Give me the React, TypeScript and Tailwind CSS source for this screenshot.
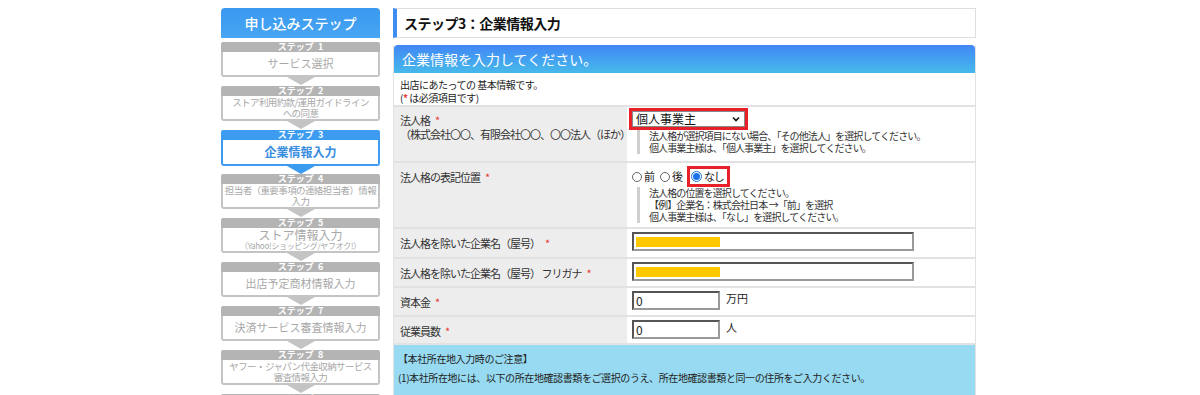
const font = { fontFamily: '"Noto Sans CJK JP", "Noto Sans", sans-serif' };

type Step = { no: number; lines: string[]; sub?: string; active?: boolean; small?: boolean };

const steps: Step[] = [
  { no: 1, lines: ['サービス選択'] },
  { no: 2, lines: ['ストア利用約款/運用ガイドライン', 'への同意'], small: true },
  { no: 3, lines: ['企業情報入力'], active: true },
  { no: 4, lines: ['担当者（重要事項の連絡担当者）情報', '入力'], small: true },
  { no: 5, lines: ['ストア情報入力'], sub: '（Yahoo!ショッピング/ヤフオク!）' },
  { no: 6, lines: ['出店予定商材情報入力'] },
  { no: 7, lines: ['決済サービス審査情報入力'] },
  { no: 8, lines: ['ヤフー・ジャパン代金収納サービス', '審査情報入力'], small: true },
  { no: 9, lines: [''] },
];

const StepBox = ({ step }: { step: Step }) => {
  const color = step.active ? 'bg-[#3d9cf0]' : 'bg-[#b4b4b4]';
  const border = step.active ? 'border-[#3d9cf0]' : 'border-[#c4c4c4]';
  return (
    <div className="flex flex-col items-center">
      <div className={`w-full h-[10px] ${color} text-white text-[9px] leading-[10px] font-bold text-center rounded-t-[2px]`}>
        ステップ&nbsp;&nbsp;{step.no}
      </div>
      <div
        className={`w-full ${step.active ? 'h-[26px]' : 'h-[25px]'} bg-white border-2 border-t-0 ${border} rounded-b-[3px] flex flex-col items-center justify-center`}
      >
        {step.small ? (
          step.lines.map((l) => (
            <div key={l} className="text-[9.5px] leading-[11px] tracking-[-0.6px] text-[#a8a8a8] whitespace-nowrap">
              {l}
            </div>
          ))
        ) : (
          <div
            className={
              step.active
                ? 'text-[12px] leading-[14px] font-bold text-[#3a8ee0]'
                : step.sub
                  ? 'text-[12px] leading-[12px] text-[#a8a8a8]'
                  : 'text-[11px] leading-[13px] text-[#a8a8a8]'
            }
          >
            {step.lines[0]}
          </div>
        )}
        {step.sub && (
          <div className="text-[8px] leading-[9px] tracking-[-0.3px] text-[#a8a8a8] whitespace-nowrap">{step.sub}</div>
        )}
      </div>
      <div
        className={`w-0 h-0 border-l-[14px] border-r-[14px] border-t-[8px] border-l-transparent border-r-transparent ${
          step.active ? 'border-t-[#3d9cf0]' : 'border-t-[#c4c4c4]'
        } ${step.active ? 'mb-0' : 'mb-[1px]'}`}
      />
    </div>
  );
};

const Req = () => <span className="text-[#e53935] ml-[5px]">*</span>;

const Note = ({ lines }: { lines: string[] }) => (
  <div className="ml-[5px] pl-[9px] border-l-[3px] border-[#cfcfcf] text-[10px] leading-[12px] tracking-[-0.9px] text-[#333] whitespace-nowrap">
    {lines.map((l) => (
      <div key={l}>{l}</div>
    ))}
  </div>
);

const Row = ({ label, children, h }: { label: React.ReactNode; children: React.ReactNode; h: string }) => (
  <div className={`flex border-b-2 border-[#e2e2e2] ${h}`}>
    <div className="w-[233px] shrink-0 bg-[#ededed] pl-[6px] pt-[6px] text-[11px] leading-[14px] tracking-[-1px] text-[#333] whitespace-nowrap">
      {label}
    </div>
    <div className="flex-1 bg-white pl-[5px] pt-[3px]">{children}</div>
  </div>
);

const TextBox = ({ w, value, masked }: { w: string; value?: string; masked?: boolean }) => (
  <div
    className={`${w} h-[19px] bg-white border-2 border-t-[#555] border-l-[#555] border-r-[#999] border-b-[#999] flex items-center px-[2px] text-[12px] text-[#222]`}
  >
    {masked && <div className="w-[84px] h-[10px] bg-[#ffc800]" />}
    {value}
  </div>
);

export default function App() {
  return (
    <div className="w-[1200px] h-[395px] overflow-hidden bg-white text-[#333]" style={font}>
      <div className="flex gap-[13px] pl-[221px] pt-[8px]">
        {/* sidebar */}
        <div className="w-[159px] shrink-0 flex flex-col">
          <div className="h-[30px] bg-gradient-to-b from-[#3a98f0] to-[#48a6f2] rounded-t-[4px] text-white text-[14px] font-medium flex items-center justify-center">
            申し込みステップ
          </div>
          <div className="mt-[4px] flex flex-col">
            {steps.map((s) => (
              <StepBox key={s.no} step={s} />
            ))}
          </div>
        </div>

        {/* main */}
        <div className="w-[583px] shrink-0 flex flex-col">
          <div className="h-[30px] bg-white border border-[#dedede] border-l-[4px] border-l-[#3d8ef0] flex items-center pl-[7px] text-[14px] font-bold tracking-[-0.5px] text-[#111]">
            ステップ3：企業情報入力
          </div>

          <div className="mt-[7px] border-x border-[#e2e2e2]">
            <div className="h-[28px] rounded-t-[4px] bg-gradient-to-b from-[#4286f4] to-[#47b9ea] flex items-center pl-[8px] text-[14px] text-white">
              企業情報を入力してください。
            </div>
            <div className="h-[34px] pl-[6px] pt-[5px] text-[10px] leading-[13px] tracking-[-0.5px] text-[#222] border-b-2 border-[#e2e2e2]">
              <div>出店にあたっての 基本情報です。</div>
              <div>
                (<span className="text-[#e53935] font-bold">*</span> は必須項目です)
              </div>
            </div>

            <Row
              h="h-[56px]"
              label={
                <>
                  <div>
                    法人格<Req />
                  </div>
                  <div>（株式会社〇〇、有限会社〇〇、〇〇法人（ほか）</div>
                </>
              }
            >
              <div className="relative w-[119px] h-[22px] -mt-[2px] -ml-[3px]">
                <div className="absolute inset-[3px] bg-white border border-[#888] flex items-center justify-between px-[3px] text-[12px] text-[#111]">
                  <span>個人事業主</span>
                  <svg width="10" height="10" viewBox="0 0 10 10">
                    <path d="M2 3.5 L5 6.5 L8 3.5" stroke="#111" strokeWidth="1.6" fill="none" />
                  </svg>
                </div>
                <div className="absolute inset-0 border-[3px] border-[#e8202a]" />
              </div>
              <Note lines={['法人格が選択項目にない場合、「その他法人」を選択してください。', '個人事業主様は、「個人事業主」を選択してください。']} />
            </Row>

            <Row
              h="h-[66px]"
              label={
                <div className="pt-[1px]">
                  法人格の表記位置<Req />
                </div>
              }
            >
              <div className="flex items-center h-[21px] text-[11px] text-[#222]">
                <span className="flex items-center">
                  <span className="w-[10px] h-[10px] rounded-full border border-[#666] mr-[2px]" />前
                </span>
                <span className="flex items-center ml-[5px]">
                  <span className="w-[10px] h-[10px] rounded-full border border-[#666] mr-[2px]" />後
                </span>
                <span className="flex items-center ml-[4px] h-[21px] pl-[1px] pr-[3px] border-[3px] border-[#e8202a] tracking-[-1.2px]">
                  <span className="w-[11px] h-[11px] rounded-full border border-[#1a73e8] flex items-center justify-center mr-[2px]">
                    <span className="w-[7px] h-[7px] rounded-full bg-[#1a73e8]" />
                  </span>
                  なし
                </span>
              </div>
              <Note
                lines={['法人格の位置を選択してください。', '【例】企業名：株式会社日本 →「前」を選択', '個人事業主様は、「なし」を選択してください。']}
              />
            </Row>

            <Row
              h="h-[30px]"
              label={
                <div className="pt-[1px]">
                  法人格を除いた企業名（屋号）<Req />
                </div>
              }
            >
              <TextBox w="w-[282px]" masked />
            </Row>

            <Row
              h="h-[29px]"
              label={
                <div className="pt-[1px]">
                  法人格を除いた企業名（屋号） フリガナ<Req />
                </div>
              }
            >
              <TextBox w="w-[282px]" masked />
            </Row>

            <Row
              h="h-[29px]"
              label={
                <div className="pt-[1px]">
                  資本金<Req />
                </div>
              }
            >
              <div className="flex items-start gap-[6px] text-[11px] text-[#222]">
                <TextBox w="w-[88px]" value="0" />
                <span className="-mt-[1px]">万円</span>
              </div>
            </Row>

            <Row
              h="h-[28px]"
              label={
                <div className="pt-[1px]">
                  従業員数<Req />
                </div>
              }
            >
              <div className="flex items-start gap-[6px] text-[11px] text-[#222]">
                <TextBox w="w-[88px]" value="0" />
                <span className="-mt-[1px]">人</span>
              </div>
            </Row>

            <div className="h-[60px] bg-[#97daf1] pl-[4px] pt-[4px] text-[10px] leading-[19px] tracking-[-0.4px] text-[#222]">
              <div>【本社所在地入力時のご注意】</div>
              <div>(1)本社所在地には、以下の所在地確認書類をご選択のうえ、所在地確認書類と同一の住所をご入力ください。</div>
            </div>
          </div>
        </div>
      </div>
    </div>
  );
}
